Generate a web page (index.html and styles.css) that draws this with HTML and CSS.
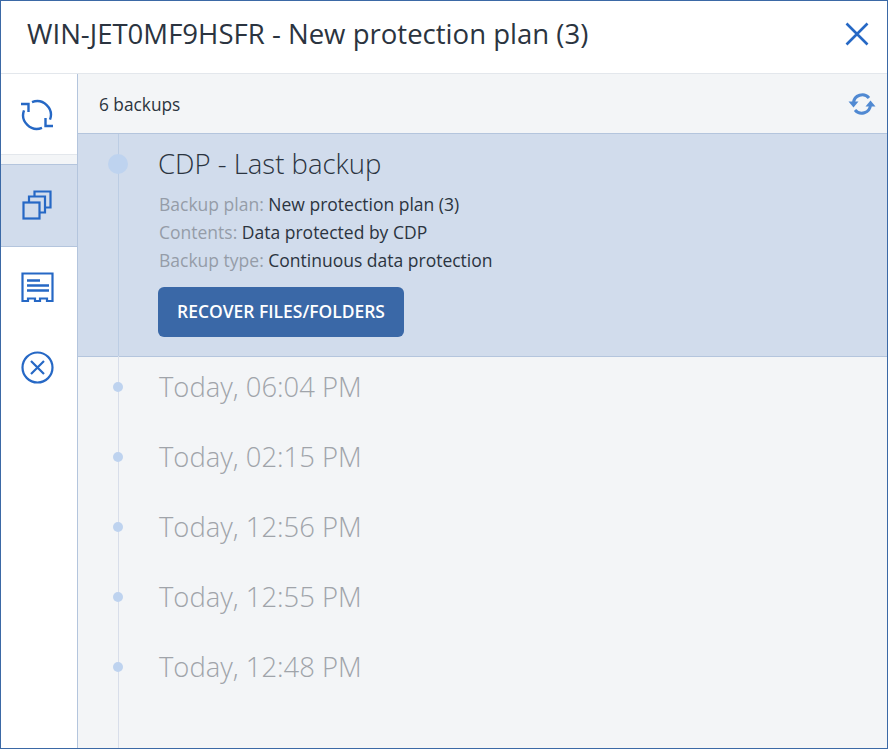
FILE: index.html
```html
<!DOCTYPE html>
<html lang="en">
<head>
<meta charset="utf-8">
<title>New protection plan</title>
<link rel="stylesheet" href="styles.css">
</head>
<body>
<div class="window">
  <header class="header">
    <h1 class="title">WIN-JET0MF9HSFR - New protection plan (3)</h1>
    <svg class="close" width="24" height="24" viewBox="0 0 24 24"><path d="M1.500 1.500 22.500 22.500M22.500 1.500 1.500 22.500" fill="none" stroke="#2668c5" stroke-width="2.600"/></svg>
  </header>
  <div class="body">
    <nav class="sidebar">
      <div class="tab tab-first">
        <svg width="34" height="32" viewBox="0 0 34 32" fill="none" stroke="#2668c5" stroke-width="2.400">
          <path d="M12 3.100A13.800 13.800 0 0 1 30 20.700"/>
          <path d="M22 28.900A13.800 13.800 0 0 1 4 11.300"/>
          <path d="M1 5H8.500V13"/>
          <path d="M33 27H25.500V19"/>
        </svg>
      </div>
      <div class="tab-gap"></div>
      <div class="tab tab-active">
        <svg width="30" height="30" viewBox="0 0 30 30" fill="none" stroke="#2668c5" stroke-width="2.200">
          <path d="M12.500 7V1.500H28.500V17.500H23"/>
          <path d="M7 12.500V6.500H23V22.500H17.500"/>
          <rect x="1.500" y="12.500" width="16" height="16"/>
        </svg>
      </div>
      <div class="tab tab-plain">
        <svg width="33" height="30" viewBox="0 0 33 30" fill="none" stroke="#2668c5" stroke-width="2.200">
          <path d="M1.500 29V1.500H31.500V29H26V26.500H19V29H14V26.500H7V29Z"/>
          <path d="M6 8.500H19M6 13.500H28M6 18.500H28" stroke-width="2.400"/>
        </svg>
      </div>
      <div class="tab tab-plain">
        <svg width="33" height="33" viewBox="0 0 33 33" fill="none" stroke="#2668c5" stroke-width="2.200">
          <circle cx="16.500" cy="16.500" r="15"/>
          <path d="M10 10 23 23M23 10 10 23"/>
        </svg>
      </div>
    </nav>
    <main class="content">
      <div class="toolbar">
        <span class="count">6 backups</span>
        <svg width="28" height="22" viewBox="0 0 28 22" fill="none" stroke="#5089d2" stroke-width="3">
          <path d="M5.500 10A8.800 8.800 0 0 1 21 5"/>
          <path d="M22.500 12A8.800 8.800 0 0 1 7 17"/>
          <path d="M0.500 8.500H10.500L5.500 14.500Z" fill="#5089d2" stroke="none"/>
          <path d="M17.500 13.500H27.500L22.500 7.500Z" fill="#5089d2" stroke="none"/>
        </svg>
      </div>
      <div class="timeline">
        <div class="rail"></div>
        <section class="selected">
          <span class="dot-large"></span>
          <h2 class="selected-title">CDP - Last backup</h2>
          <dl class="details">
            <div><dt>Backup plan:</dt> <dd>New protection plan (3)</dd></div>
            <div><dt>Contents:</dt> <dd>Data protected by CDP</dd></div>
            <div><dt>Backup type:</dt> <dd>Continuous data protection</dd></div>
          </dl>
          <button class="recover">RECOVER FILES/FOLDERS</button>
        </section>
        <div class="entries">
          <div class="entry"><span class="dot"></span>Today, 06:04 PM</div>
          <div class="entry"><span class="dot"></span>Today, 02:15 PM</div>
          <div class="entry"><span class="dot"></span>Today, 12:56 PM</div>
          <div class="entry"><span class="dot"></span>Today, 12:55 PM</div>
          <div class="entry"><span class="dot"></span>Today, 12:48 PM</div>
        </div>
      </div>
    </main>
  </div>
</div>
</body>
</html>
```
FILE: styles.css
```css
* { box-sizing: border-box; }
html, body { margin: 0; height: 100%; }
body { font-family: "Open Sans", sans-serif; color: #2b3440; background: #fff; }
.window {
  width: 888px;
  height: 749px;
  border: 1px solid #3b69a6;
  display: flex;
  flex-direction: column;
  overflow: hidden;
}
.header {
  height: 73px;
  flex: none;
  display: flex;
  align-items: center;
  justify-content: space-between;
  padding: 0 18px 8px 26px;
  border-bottom: 1px solid #e3e7ec;
}
.title { margin: 0; font-size: 27.550px; font-weight: 400; color: #2b3440; }
.close { display: block; margin-top: 1px; }
.body { flex: 1; display: flex; min-height: 0; }
.sidebar { width: 77px; flex: none; border-right: 1px solid #b4c5dd; display: flex; flex-direction: column; }
.tab { display: flex; align-items: center; justify-content: center; flex: none; padding-right: 4px; }
.tab-first { height: 81px; border-bottom: 1px solid #e3e7ec; padding-top: 1px; }
.tab-gap { height: 9px; background: #f3f5f7; }
.tab-active { height: 83px; padding-bottom: 1px; background: #d1dcec; border-top: 1px solid #b4c5dd; border-bottom: 1px solid #b4c5dd; }
.tab-plain { height: 80px; }
.content { flex: 1; min-width: 0; background: #f3f5f7; display: flex; flex-direction: column; }
.toolbar {
  height: 60px;
  flex: none;
  display: flex;
  align-items: center;
  justify-content: space-between;
  padding: 0 11px 0 21px;
  border-bottom: 1px solid #b4c5dd;
}
.count { font-size: 17.300px; color: #2b3440; margin-top: 2px; }
.timeline { position: relative; flex: 1; }
.rail { position: absolute; left: 40px; top: 0; bottom: 0; width: 1px; background: #d8deea; z-index: 1; }
.selected {
  position: relative;
  height: 223px;
  padding: 12px 0 0 81px;
  background: #d1dcec;
  border-bottom: 1px solid #b4c5dd;
}
.selected::before { content: ""; position: absolute; left: 40px; top: 0; bottom: 0; width: 1px; background: #bccde4; z-index: 2; }
.dot-large { position: absolute; left: 30px; top: 20px; width: 20px; height: 20px; border-radius: 50%; background: #bed3ef; z-index: 3; }
.selected-title { margin: 0 0 8px -1px; font-size: 27.500px; line-height: 36px; font-weight: 300; color: #2b3440; }
.details { margin: 0; font-size: 17.500px; line-height: 28px; }
.details div { display: block; }
.details dt, .details dd { display: inline; margin: 0; }
.details dt { color: #959ca8; }
.details dd { color: #2b3440; }
.recover {
  display: block;
  margin: 13px 0 0 -1px;
  width: 246px;
  height: 50px;
  padding: 0 0 2px;
  border: 0;
  border-radius: 6px;
  background: #3a68a7;
  color: #fff;
  font: 600 17.450px "Open Sans", sans-serif;
}
.entries { padding-top: 9px; display: flex; flex-direction: column; gap: 30px; }
.entry {
  position: relative;
  height: 40px;
  display: flex;
  align-items: center;
  padding-left: 81px;
  font-size: 27.400px;
  font-weight: 300;
  color: #a0a4aa;
}
.dot { position: absolute; left: 35px; top: 16px; width: 10px; height: 10px; border-radius: 50%; background: #bed3ef; z-index: 3; }
```
